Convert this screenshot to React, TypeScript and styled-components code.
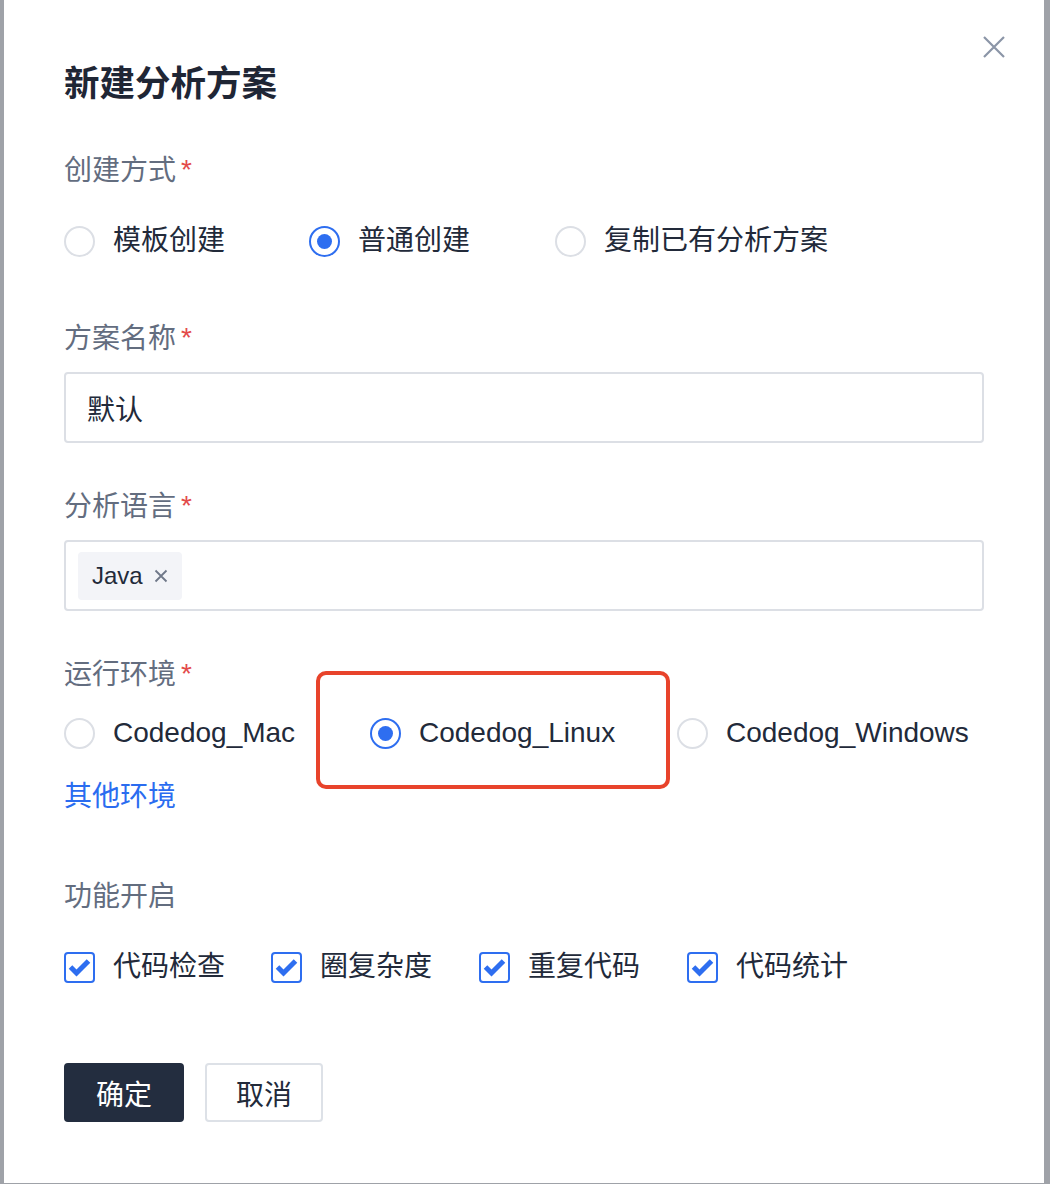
import React from "react";
import styled, { createGlobalStyle } from "styled-components";

const FONT = `"Liberation Sans", "Noto Sans CJK SC", sans-serif`;

const GlobalStyle = createGlobalStyle`
  html, body {
    margin: 0;
    padding: 0;
    background: #9fa2a8;
  }
  body {
    font-family: ${FONT};
    -webkit-font-smoothing: antialiased;
  }
  * { box-sizing: border-box; }
`;

const Backdrop = styled.div`
  width: 1050px;
  height: 1184px;
  padding: 0 6px 0 4px;
  background: #9fa2a8;
  overflow: hidden;
`;

const Dialog = styled.div`
  position: relative;
  width: 1040px;
  height: 1183px;
  background: #ffffff;
  padding: 64px 60px 0 60px;
  display: flex;
  flex-direction: column;
`;

const Title = styled.h1`
  margin: 0;
  font-size: 35.5px;
  line-height: 40px;
  font-weight: 700;
  color: #1f2635;
  font-family: ${FONT};
`;

const CloseButton = styled.button`
  position: absolute;
  top: 35px;
  right: 38px;
  width: 24px;
  height: 24px;
  padding: 0;
  border: none;
  background: transparent;
  display: flex;
  align-items: center;
  justify-content: center;
`;

const Label = styled.div<{ $mt: number }>`
  margin-top: ${(p) => p.$mt}px;
  font-size: 28px;
  line-height: 40px;
  height: 40px;
  color: #636d7f;
  display: flex;
  align-items: center;
`;

const Required = styled.span`
  color: #e34a4a;
  margin-left: 5px;
  font-size: 28px;
  position: relative;
  top: -1px;
`;

const OptionRow = styled.div<{ $mt: number; $cols: string }>`
  margin-top: ${(p) => p.$mt}px;
  display: grid;
  grid-template-columns: ${(p) => p.$cols};
  height: 40px;
  align-items: center;
`;

const Option = styled.label`
  display: flex;
  align-items: center;
  gap: 18px;
  font-size: 28px;
  line-height: 40px;
  color: #222a3a;
  white-space: nowrap;
`;

const RadioCircle = styled.span<{ $checked?: boolean }>`
  width: 31px;
  height: 31px;
  border-radius: 50%;
  border: 2px solid ${(p) => (p.$checked ? "#2e6ef0" : "#dcdfe5")};
  background: #fff;
  display: flex;
  align-items: center;
  justify-content: center;
  flex-shrink: 0;
  &::after {
    content: "";
    display: ${(p) => (p.$checked ? "block" : "none")};
    width: 15px;
    height: 15px;
    border-radius: 50%;
    background: #2e6ef0;
  }
`;

const CheckBox = styled.span`
  width: 31px;
  height: 31px;
  border: 2px solid #2e6ef0;
  border-radius: 4px;
  background: #fff;
  display: flex;
  align-items: center;
  justify-content: center;
  flex-shrink: 0;
`;

const Input = styled.div<{ $mt: number }>`
  margin-top: ${(p) => p.$mt}px;
  width: 920px;
  height: 71px;
  border: 2px solid #dcdfe5;
  border-radius: 4px;
  padding: 0 21px;
  display: flex;
  align-items: center;
  font-size: 28px;
  color: #222a3a;
`;

const SelectBox = styled.div<{ $mt: number }>`
  margin-top: ${(p) => p.$mt}px;
  width: 920px;
  height: 71px;
  border: 2px solid #dcdfe5;
  border-radius: 4px;
  padding: 10px 12px;
  display: flex;
  align-items: center;
`;

const Tag = styled.span`
  height: 48px;
  padding: 0 14px;
  border-radius: 4px;
  background: #f3f4f8;
  display: flex;
  align-items: center;
  gap: 11px;
  font-size: 24px;
  color: #222a3a;
`;

const TagClose = styled.span`
  display: flex;
  align-items: center;
`;

const Link = styled.a<{ $mt: number }>`
  margin-top: ${(p) => p.$mt}px;
  font-size: 28px;
  line-height: 40px;
  height: 40px;
  color: #2a6cf0;
  text-decoration: none;
  align-self: flex-start;
`;

const Footer = styled.div<{ $mt: number }>`
  margin-top: ${(p) => p.$mt}px;
  display: flex;
  gap: 21px;
`;

const Button = styled.button<{ $primary?: boolean; $w: number }>`
  width: ${(p) => p.$w}px;
  height: 59px;
  border-radius: 4px;
  font-family: ${FONT};
  font-size: 28px;
  border: 2px solid ${(p) => (p.$primary ? "#232d3f" : "#dde1e7")};
  background: ${(p) => (p.$primary ? "#232d3f" : "#ffffff")};
  color: ${(p) => (p.$primary ? "#ffffff" : "#222a3a")};
  display: flex;
  align-items: center;
  justify-content: center;
  padding: 0;
`;

const Highlight = styled.div`
  position: absolute;
  left: 312px;
  top: 671px;
  width: 354px;
  height: 118px;
  border: 4px solid #e8432b;
  border-radius: 10px;
  pointer-events: none;
`;

const CheckMark = () => (
  <svg width="27" height="27" viewBox="0 0 27 27">
    <path
      d="M4.5 13 L10.5 19 L22.5 7"
      fill="none"
      stroke="#2e6ef0"
      strokeWidth="5"
      strokeLinejoin="miter"
    />
  </svg>
);

const CloseIcon = () => (
  <svg width="22" height="22" viewBox="0 0 22 22">
    <path d="M1 1 L21 21 M21 1 L1 21" stroke="#8b95a7" strokeWidth="2.2" fill="none" />
  </svg>
);

const SmallX = () => (
  <svg width="14" height="14" viewBox="0 0 14 14">
    <path d="M1.5 1.5 L12.5 12.5 M12.5 1.5 L1.5 12.5" stroke="#6f7889" strokeWidth="1.8" fill="none" />
  </svg>
);

const createOptions = [
  { label: "模板创建", checked: false },
  { label: "普通创建", checked: true },
  { label: "复制已有分析方案", checked: false },
];

const envOptions = [
  { label: "Codedog_Mac", checked: false },
  { label: "Codedog_Linux", checked: true },
  { label: "Codedog_Windows", checked: false },
];

const features = ["代码检查", "圈复杂度", "重复代码", "代码统计"];

export default function App() {
  return (
    <>
      <GlobalStyle />
      <Backdrop>
        <Dialog>
          <CloseButton aria-label="close">
            <CloseIcon />
          </CloseButton>
          <Title>新建分析方案</Title>

          <Label $mt={47}>
            创建方式<Required>*</Required>
          </Label>
          <OptionRow $mt={30} $cols="245px 246px auto">
            {createOptions.map((o) => (
              <Option key={o.label}>
                <RadioCircle $checked={o.checked} />
                {o.label}
              </Option>
            ))}
          </OptionRow>

          <Label $mt={58}>
            方案名称<Required>*</Required>
          </Label>
          <Input $mt={13}>默认</Input>

          <Label $mt={44}>
            分析语言<Required>*</Required>
          </Label>
          <SelectBox $mt={13}>
            <Tag>
              Java
              <TagClose>
                <SmallX />
              </TagClose>
            </Tag>
          </SelectBox>

          <Label $mt={44}>
            运行环境<Required>*</Required>
          </Label>
          <OptionRow $mt={18} $cols="306px 307px auto">
            {envOptions.map((o) => (
              <Option key={o.label}>
                <RadioCircle $checked={o.checked} />
                {o.label}
              </Option>
            ))}
          </OptionRow>
          <Link $mt={24} href="#">
            其他环境
          </Link>

          <Label $mt={60}>功能开启</Label>
          <OptionRow $mt={30} $cols="207px 208px 208px auto">
            {features.map((f) => (
              <Option key={f}>
                <CheckBox>
                  <CheckMark />
                </CheckBox>
                {f}
              </Option>
            ))}
          </OptionRow>

          <Footer $mt={76}>
            <Button $primary $w={120}>
              确定
            </Button>
            <Button $w={118}>取消</Button>
          </Footer>

          <Highlight />
        </Dialog>
      </Backdrop>
    </>
  );
}
